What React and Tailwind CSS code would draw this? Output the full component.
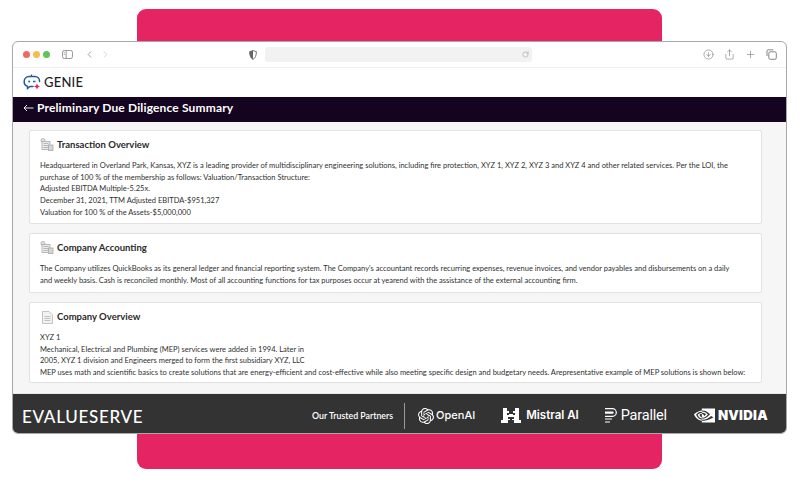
import React from "react";
import { SiOpenai, SiNvidia } from "react-icons/si";
import { ChevronLeft, ChevronRight, RotateCw, Plus, Share, CircleArrowDown } from "lucide-react";

function Sidebar() {
  return (
    <svg width="11" height="9" viewBox="0 0 12 10" fill="none" stroke="#8a8a8a" strokeWidth="1">
      <rect x="0.5" y="0.5" width="11" height="9" rx="2" />
      <path d="M4.5 0.5v9" />
      <path d="M1.8 3h1.4M1.8 5h1.4" strokeWidth="0.8" />
    </svg>
  );
}

function Shield() {
  return (
    <svg width="8" height="10" viewBox="0 0 9 11">
      <path d="M4.5 0.5 8.3 1.8c0 4-1 7-3.800 8.700C1.700 8.800 .7 5.800 .7 1.800Z" fill="none" stroke="#666" strokeWidth="1" />
      <path d="M4.500 .5 .7 1.800c0 4 1 7 3.800 8.700Z" fill="#666" />
    </svg>
  );
}

function Tabs() {
  return (
    <svg width="11" height="11" viewBox="0 0 11 11" fill="none" stroke="#777" strokeWidth="0.9">
      <rect x="2.800" y="2.800" width="7.500" height="7.500" rx="1.500" />
      <path d="M1 7V2a1.200 1.200 0 0 1 1.200-1.200h5" />
    </svg>
  );
}

function GenieLogo() {
  return (
    <svg width="18" height="17" viewBox="0 0 18 17" fill="none">
      <path d="M8.500 .5v2" stroke="#1d5aa8" strokeWidth="1.200" />
      <path d="M6 2.500h6a4.500 4.500 0 0 1 4.500 4.500v.5M10 12.500H7l-2.500 2v-2.200A4.700 4.700 0 0 1 1.200 7.500 5 5 0 0 1 6 2.500" stroke="#1d5aa8" strokeWidth="1.500" strokeLinecap="round" />
      <circle cx="6.200" cy="7.500" r="1" fill="#1d5aa8" />
      <path d="M10 7.500h2.500" stroke="#1d5aa8" strokeWidth="1.300" />
      <path d="M14 9.500l.9 2.100 2.100.9-2.100.9-.9 2.100-.9-2.100-2.100-.9 2.100-.9Z" fill="#e0245e" />
    </svg>
  );
}

function DocsIcon() {
  return (
    <svg width="14" height="14" viewBox="0 0 14 14" fill="none" stroke="#a9a9a9" strokeWidth="0.8">
      <circle cx="3" cy="2.500" r="2" fill="#e2e2e2" />
      <rect x="2" y="3.500" width="8" height="8" fill="#ececec" />
      <path d="M3.500 5.500h5M3.500 7.500h5M3.500 9.500h5" />
      <rect x="8.500" y="7" width="4.500" height="5.500" fill="#d6d6d6" />
    </svg>
  );
}

function PageIcon() {
  return (
    <svg width="11" height="13" viewBox="0 0 11 13" fill="#f2f2f2" stroke="#b4b4b4" strokeWidth="0.8">
      <path d="M.5.5h6.500l3.500 3.500v8.500H.5Z" />
      <path d="M2.500 5.500h6M2.500 7.500h6M2.500 9.500h6" fill="none" />
    </svg>
  );
}

function MistralLogo() {
  return (
    <svg width="20" height="15" viewBox="0 0 20 15" fill="#fff">
      <path d="M2 0h4v3h2v3h4V3h2V0h4v12h2v3h-7v-3h-2V9H9v3H7v3H0v-3h2Z" />
      <path d="M6 5h2v2H6zM12 5h2v2h-2z" fill="#333" />
      <path d="M7 9h2v2H7zM11 9h2v2h-2z" fill="#333" />
    </svg>
  );
}

function ParallelLogo() {
  return (
    <svg width="12" height="15" viewBox="0 0 12 15" fill="none" stroke="#fff" strokeWidth="1.200">
      <path d="M0 .7h7.500a3.800 3.800 0 0 1 0 7.600H0" />
      <path d="M0 4h7.500a.6 .6 0 0 1 0 1.200H0" />
      <path d="M0 11h7M0 14h5" />
    </svg>
  );
}

function Card({ icon, title, children, className = "" }) {
  return (
    <section className={"bg-white border border-[#e2e2e2] rounded-[2px] px-[10px] pt-[7px] " + className}>
      <div className="flex items-center h-[14px] gap-[3px]">
        <span className="w-[14px] flex justify-center">{icon}</span>
        <h2 className="text-[9.500px] font-bold text-[#2a2a2a] leading-none">{title}</h2>
      </div>
      <div className="mt-[8px] text-[7.530px] leading-[11.700px] text-[#2f2f2f] whitespace-nowrap">{children}</div>
    </section>
  );
}

export default function App() {
  return (
    <div className="relative w-[800px] h-[477px] bg-white overflow-hidden font-['Lato','Noto_Sans',sans-serif]">
      <div className="absolute left-[137px] top-[9px] w-[525px] h-[460px] rounded-[9px] bg-[#e52463]" />
      <div className="relative mx-[12px] mt-[41px] h-[393px] w-[775px] rounded-[6px] border border-[#a8a8a8] bg-white overflow-hidden flex flex-col">
        <header className="h-[26px] shrink-0 flex items-center border-b border-[#f0f0f0] pl-[10px] pr-[9px]">
          <div className="flex gap-[3px]">
            <span className="w-[7px] h-[7px] rounded-full bg-[#ee6a5f]" />
            <span className="w-[7px] h-[7px] rounded-full bg-[#f5bd4f]" />
            <span className="w-[7px] h-[7px] rounded-full bg-[#61c454]" />
          </div>
          <div className="ml-[12px]"><Sidebar /></div>
          <ChevronLeft className="ml-[11px] w-[11px] h-[11px] text-[#777]" strokeWidth={1.500} />
          <ChevronRight className="ml-[5px] w-[11px] h-[11px] text-[#c4c4c4]" strokeWidth={1.500} />
          <div className="ml-[138px]"><Shield /></div>
          <div className="ml-[8px] w-[267px] h-[15px] rounded-[3px] bg-[#f2f2f2] flex items-center justify-end pr-[3px]">
            <RotateCw className="w-[7px] h-[7px] text-[#888]" strokeWidth={1.500} />
          </div>
          <div className="ml-auto flex items-center gap-[10px]">
            <CircleArrowDown className="w-[11px] h-[11px] text-[#777]" strokeWidth={1.300} />
            <Share className="w-[11px] h-[11px] text-[#777]" strokeWidth={1.300} />
            <Plus className="w-[11px] h-[11px] text-[#777]" strokeWidth={1.300} />
            <Tabs />
          </div>
        </header>
        <div className="h-[29px] shrink-0 flex items-center gap-[3px] pl-[10px]">
          <GenieLogo />
          <span className="text-[13px] font-medium text-[#1e1e1e] tracking-[0.2px]">GENIE</span>
        </div>
        <div className="h-[25px] shrink-0 bg-[#15041f] flex items-center pl-[10px] pb-[3px] gap-[3px] text-white">
          <svg width="11" height="8" viewBox="0 0 11 8" fill="none" stroke="#fff" strokeWidth="0.900"><path d="M10.500 4H1M4 1 1 4l3 3" /></svg>
          <h1 className="text-[12px] font-bold tracking-[0.15px]">Preliminary Due Diligence Summary</h1>
        </div>
        <main className="flex-1 min-h-0 bg-[#f6f6f6] border-b border-[#e8e8e8] pl-[16px] pr-[24px] pt-[8px] flex flex-col gap-[9px]">
          <Card icon={<DocsIcon />} title="Transaction Overview" className="h-[94px]">
            <p>Headquartered in Overland Park, Kansas, XYZ is a leading provider of multidisciplinary engineering solutions, including fire protection, XYZ 1, XYZ 2, XYZ 3 and XYZ 4 and other related services. Per the LOI, the<br />purchase of 100 % of the membership as follows: Valuation/Transaction Structure:</p>
            <p>Adjusted EBITDA Multiple-5.25x.</p>
            <p>December 31, 2021, TTM Adjusted EBITDA-$951,327</p>
            <p>Valuation for 100 % of the Assets-$5,000,000</p>
          </Card>
          <Card icon={<DocsIcon />} title="Company Accounting" className="h-[60px]">
            <p>The Company utilizes QuickBooks as its general ledger and financial reporting system. The Company's accountant records recurring expenses, revenue invoices, and vendor payables and disbursements on a daily<br />and weekly basis. Cash is reconciled monthly. Most of all accounting functions for tax purposes occur at yearend with the assistance of the external accounting firm.</p>
          </Card>
          <Card icon={<PageIcon />} title="Company Overview" className="h-[81px]">
            <p>XYZ 1</p>
            <p>Mechanical, Electrical and Plumbing (MEP) services were added in 1994. Later in</p>
            <p>2005, XYZ 1 division and Engineers merged to form the first subsidiary XYZ, LLC</p>
            <p>MEP uses math and scientific basics to create solutions that are energy-efficient and cost-effective while also meeting specific design and budgetary needs. Arepresentative example of MEP solutions is shown below:</p>
          </Card>
        </main>
        <footer className="h-[39px] shrink-0 bg-[#333333] flex items-center pt-[4px] pl-[9px] pr-[18px] text-white">
          <span className="mt-[2px] text-[17px] font-medium tracking-[0.700px] leading-none">EVALUESERVE</span>
          <span className="ml-auto text-[8.800px] font-semibold">Our Trusted Partners</span>
          <span className="ml-[11px] h-[26px] w-px bg-[#9a9a9a]" />
          <div className="ml-[13px] flex items-center gap-[2px]">
            <SiOpenai className="w-[16px] h-[16px]" />
            <span className="text-[11px] font-medium font-['Inter',sans-serif]">OpenAI</span>
          </div>
          <div className="ml-[26px] flex items-center gap-[5px]">
            <MistralLogo />
            <span className="text-[11.500px] font-semibold font-['Inter',sans-serif]">Mistral AI</span>
          </div>
          <div className="ml-[26px] flex items-center gap-[4px]">
            <ParallelLogo />
            <span className="text-[14.500px] font-['Roboto',sans-serif] font-normal tracking-[-0.2px]">Parallel</span>
          </div>
          <div className="ml-[27px] flex items-center gap-[3px]">
            <SiNvidia className="w-[21px] h-[21px]" />
            <span className="text-[13.200px] font-black tracking-[0.3px] font-['Inter',sans-serif]">NVIDIA</span>
          </div>
        </footer>
      </div>
    </div>
  );
}
